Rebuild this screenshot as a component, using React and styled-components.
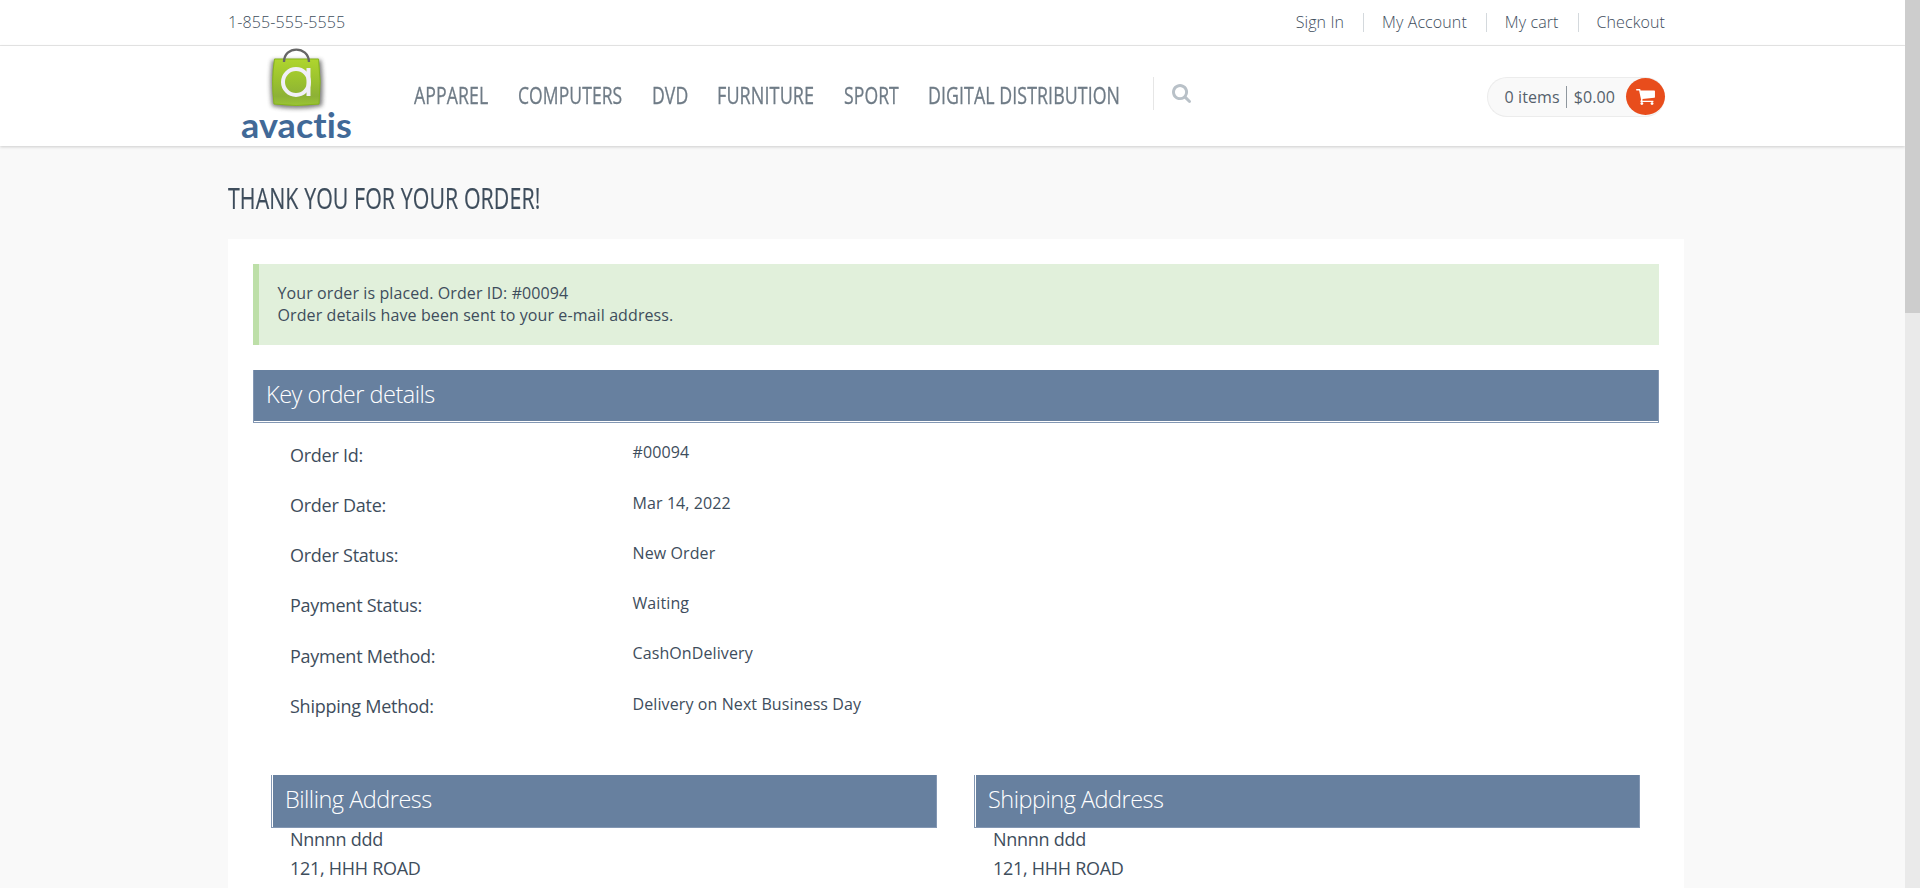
import React from "react";
import styled, { createGlobalStyle } from "styled-components";

const GlobalStyle = createGlobalStyle`
  * { box-sizing: border-box; }
  body {
    margin: 0;
    height: 888px;
    overflow: hidden;
    background: #f9f9f9;
    color: #3e4d5c;
    font: 400 16px/22px "Open Sans", sans-serif;
    letter-spacing: 0.1px;
  }
`;

const Page = styled.div`
  display: flex;
  height: 888px;
  overflow: hidden;
`;

const Content = styled.div`
  flex: 1;
  min-width: 0;
`;

const ScrollTrack = styled.div`
  width: 15px;
  background: #eaeaea;
`;

const ScrollThumb = styled.div`
  height: 313px;
  background: #cdcdcd;
`;

const TopBar = styled.div`
  display: flex;
  justify-content: space-between;
  height: 46px;
  padding: 13px 240px 0 228px;
  background: #fff;
  border-bottom: 1px solid #e8e8e8;
  font-weight: 300;
  line-height: 19px;
`;

const TopLinks = styled.nav`
  display: flex;
`;

const TopLink = styled.a`
  height: 19px;
  padding: 0 19px 0 18px;
  border-right: 1px solid #d4d9dd;
  white-space: nowrap;
  &:last-child { padding-right: 0; border-right: 0; }
`;

const Header = styled.header`
  display: flex;
  align-items: flex-start;
  height: 100px;
  padding: 0 240px 0 228px;
  background: #fff;
  box-shadow: 0 1px 3px rgba(0, 0, 0, 0.18);
`;

const Logo = styled.svg`
  display: block;
  width: 136px;
  height: 98px;
`;

const Menu = styled.nav`
  display: flex;
  margin: 32px 0 0 50px;
`;

const FitBox = styled.span`
  display: block;
  width: ${(p) => p.$width}px;
  white-space: nowrap;
`;

const Squeezed = styled.span`
  display: inline-block;
  transform-origin: 0 50%;
`;

const MenuItem = styled.a`
  margin-right: ${(p) => p.$gap}px;
  color: #6f7b86;
  font-size: 24px;
  font-weight: 500;
  line-height: 33px;
  -webkit-text-stroke: 0.3px #6f7b86;
`;

const SearchArea = styled.div`
  height: 33px;
  margin: 31px 0 0 3px;
  padding: 7px 0 0 18px;
  border-left: 1px solid #e6e6e6;
  color: #b9c1c8;
`;

const Icon = styled.svg`
  display: block;
  width: ${(p) => p.$width}px;
  height: ${(p) => p.$height}px;
  fill: currentColor;
`;

const Cart = styled.div`
  display: flex;
  width: 178px;
  height: 40px;
  margin: 31px 0 0 auto;
  padding-left: 16.5px;
  background: #f9f9f9;
  border: 1px solid #ececec;
  border-right: 0;
  border-radius: 20px;
  color: #55616c;
`;

const CartText = styled.span`
  height: 22px;
  margin-top: 8px;
  white-space: nowrap;
`;

const CartCount = styled(CartText)`
  padding-right: 6.5px;
  border-right: 1px solid #8f979e;
  margin-right: 6.5px;
`;

const CartButton = styled.span`
  display: flex;
  align-items: center;
  justify-content: center;
  width: 39px;
  height: 37px;
  margin-left: auto;
  border-radius: 50%;
  background: #e84d1c;
  color: #fff;
`;

const Title = styled.h1`
  margin: 31px 0 21px 228px;
  height: 41px;
  font-size: 30px;
  font-weight: 400;
  line-height: 41px;
  -webkit-text-stroke: 0.2px #3e4d5c;
`;

const Panel = styled.main`
  width: 1456px;
  height: 700px;
  margin-left: 228px;
  padding: 25px;
  background: #fff;
`;

const Alert = styled.div`
  height: 81px;
  padding: 18px 19px 18px 18.5px;
  background: #e1f0db;
  border-left: 6px solid #bddfa8;
`;

const SectionBar = styled.h2`
  height: 53px;
  margin: 0;
  padding-left: 13px;
  border: 1px solid #8397b3;
  border-top: 0;
  background: #67809f;
  box-shadow: inset 1px 0 #fff;
  color: #fff;
  font-size: 23.5px;
  font-weight: 300;
  line-height: 48px;
  letter-spacing: -0.5px;
`;

const KeyBar = styled(SectionBar)`
  margin-top: 25px;
  padding-left: 12px;
  box-shadow: inset 0 -1px #fff;
`;

const Details = styled.dl`
  display: grid;
  grid-template-columns: 342.5px 1fr;
  grid-auto-rows: 50.25px;
  margin: 18.3px 0 32.2px 37px;
`;

const Label = styled.dt`
  padding-top: 1.35px;
  font-size: 18px;
  line-height: 25px;
  letter-spacing: -0.25px;
`;

const Value = styled.dd`
  margin: 0;
`;

const Addresses = styled.div`
  display: grid;
  grid-template-columns: 666px 666px;
  column-gap: 37px;
  padding-left: 18px;
`;

const AddressText = styled.p`
  margin: -3px 0 0 19px;
  font-size: 18px;
  line-height: 29px;
  letter-spacing: -0.28px;
`;

/* Narrows a line of text to a fixed width once its natural width is known. */
function Narrow({ width, children }) {
  const ref = React.useRef(null);
  const [scale, setScale] = React.useState(1);
  React.useLayoutEffect(() => {
    setScale(width / ref.current.offsetWidth);
  }, [width]);
  return (
    <FitBox $width={width}>
      <Squeezed ref={ref} style={{ transform: `scaleX(${scale})` }}>{children}</Squeezed>
    </FitBox>
  );
}

const menu = [
  ["APPAREL", 74.5, 29],
  ["COMPUTERS", 104.5, 30],
  ["DVD", 36, 29],
  ["FURNITURE", 97, 29.5],
  ["SPORT", 55, 29],
  ["DIGITAL DISTRIBUTION", 192, 30],
];

const details = [
  ["Order Id:", "#00094"],
  ["Order Date:", "Mar 14, 2022"],
  ["Order Status:", "New Order"],
  ["Payment Status:", "Waiting"],
  ["Payment Method:", "CashOnDelivery"],
  ["Shipping Method:", "Delivery on Next Business Day"],
];

const SearchIcon = () => (
  <Icon $width={19} $height={19} viewBox="0 128 1664 1664">
    <path d="M1152 832q0-185-131.500-316.500t-316.500-131.500-316.500 131.500-131.500 316.500 131.500 316.500 316.500 131.500 316.500-131.500 131.500-316.500zm512 832q0 52-38 90t-90 38q-54 0-90-38l-343-342q-179 124-399 124-143 0-273.500-55.500t-225-150-150-225-55.500-273.500 55.500-273.500 150-225 225-150 273.500-55.500 273.500 55.500 225 150 150 225 55.500 273.500q0 220-124 399l343 343q37 37 37 90z" />
  </Icon>
);

const CartIcon = () => (
  <Icon $width={19} $height={16} viewBox="0 256 1664 1408">
    <path d="M640 1536q0 52-38 90t-90 38-90-38-38-90 38-90 90-38 90 38 38 90zm896 0q0 52-38 90t-90 38-90-38-38-90 38-90 90-38 90 38 38 90zm128-1088v512q0 24-16.500 42.500t-40.500 21.500l-1044 122q13 60 13 70 0 16-24 64h920q26 0 45 19t19 45-19 45-45 19h-1024q-26 0-45-19t-19-45q0-11 8-31.500t16-36 21.500-40 15.500-29.500l-177-823h-204q-26 0-45-19t-19-45 19-45 45-19h256q16 0 28.500 6.500t19.500 15.500 13 24.500 8 26 5.500 29.500 4.500 26h1201q26 0 45 19t19 45z" />
  </Icon>
);

function AvactisLogo() {
  return (
    <Logo viewBox="0 0 136 98" role="img">
      <defs>
        <linearGradient id="bag" x1="0" y1="0" x2="0" y2="1">
          <stop offset="0" stopColor="#afd52e" />
          <stop offset="0.5" stopColor="#99c02f" />
          <stop offset="0.8" stopColor="#8db136" />
          <stop offset="1" stopColor="#9bc535" />
        </linearGradient>
        <filter id="shade" x="-20%" y="-20%" width="140%" height="140%">
          <feGaussianBlur stdDeviation="2.2" />
        </filter>
      </defs>
      <path d="M44 14H93Q96 35 94 60Q68 65 44 60Q41 35 44 14Z" fill="#444" opacity="0.7" filter="url(#shade)" />
      <path d="M46.500 13H90.500Q93.500 35 91 58Q68 61 46 58Q43 35 46.500 13Z" fill="url(#bag)" stroke="#86b51d" />
      <path d="M56 16C56 -0.500 80.500 -0.500 81 16" fill="none" stroke="#666" strokeWidth="2.300" />
      <circle cx="68" cy="36" r="13" fill="none" stroke="#f1eff8" strokeWidth="4" />
      <path d="M80.500 22V50" stroke="#f1eff8" strokeWidth="4" />
      <text x="13" y="91.5" fill="#416997" fontFamily="Lato, sans-serif" fontWeight="700" fontSize="34" textLength="111" lengthAdjust="spacingAndGlyphs">avactis</text>
    </Logo>
  );
}

export default function App() {
  return (
    <Page>
      <GlobalStyle />
      <Content>
        <TopBar>
          <span>1-855-555-5555</span>
          <TopLinks>
            <TopLink>Sign In</TopLink>
            <TopLink>My Account</TopLink>
            <TopLink>My cart</TopLink>
            <TopLink>Checkout</TopLink>
          </TopLinks>
        </TopBar>
        <Header>
          <AvactisLogo />
          <Menu>
            {menu.map(([name, width, gap]) => (
              <MenuItem key={name} $gap={gap}>
                <Narrow width={width}>{name}</Narrow>
              </MenuItem>
            ))}
          </Menu>
          <SearchArea><SearchIcon /></SearchArea>
          <Cart>
            <CartCount>0 items</CartCount>
            <CartText>$0.00</CartText>
            <CartButton><CartIcon /></CartButton>
          </Cart>
        </Header>
        <Title><Narrow width={312.5}>THANK YOU FOR YOUR ORDER!</Narrow></Title>
        <Panel>
          <Alert>
            Your order is placed. Order ID: #00094<br />
            Order details have been sent to your e-mail address.
          </Alert>
          <KeyBar>Key order details</KeyBar>
          <Details>
            {details.map(([label, value]) => (
              <React.Fragment key={label}>
                <Label>{label}</Label>
                <Value>{value}</Value>
              </React.Fragment>
            ))}
          </Details>
          <Addresses>
            {["Billing Address", "Shipping Address"].map((name) => (
              <section key={name}>
                <SectionBar>{name}</SectionBar>
                <AddressText>Nnnnn ddd<br />121, HHH ROAD</AddressText>
              </section>
            ))}
          </Addresses>
        </Panel>
      </Content>
      <ScrollTrack><ScrollThumb /></ScrollTrack>
    </Page>
  );
}
